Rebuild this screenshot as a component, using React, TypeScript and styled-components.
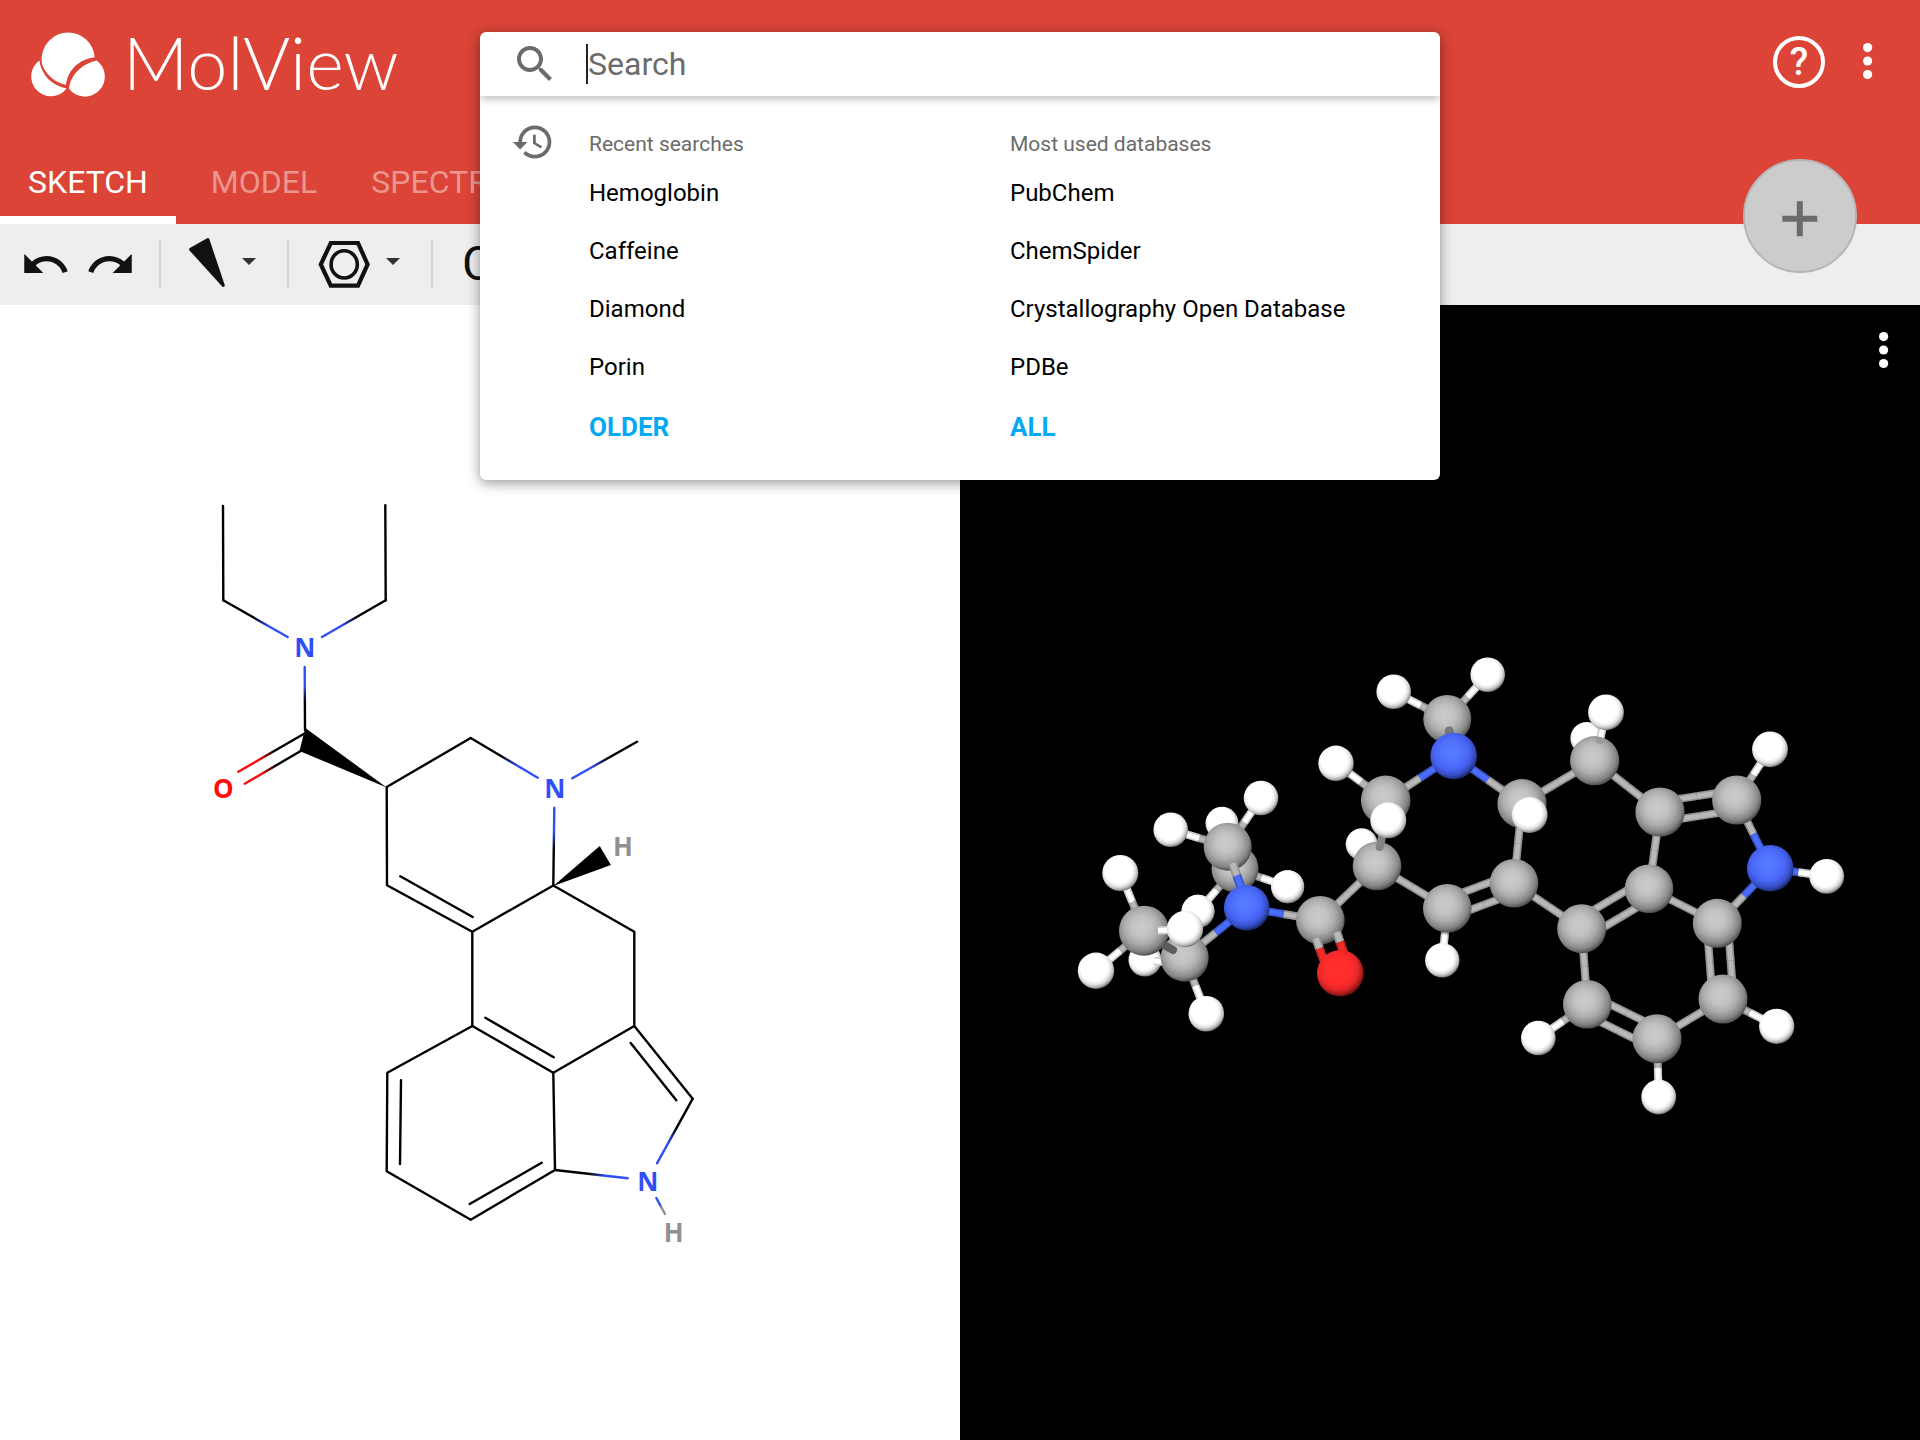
import React from "react";
import styled, { createGlobalStyle } from "styled-components";

const GlobalStyle = createGlobalStyle`
  *, *::before, *::after { box-sizing: border-box; }
  body {
    margin: 0;
    background: #fff;
    font-family: Roboto, "Liberation Sans", sans-serif;
    color: #000;
  }
  button {
    border: 0;
    padding: 0;
    margin: 0;
    background: none;
    font: inherit;
    color: inherit;
    cursor: pointer;
  }
  ul { list-style: none; margin: 0; padding: 0; }
  svg { display: block; }
`;

/* ---------- page frame ---------- */

const Page = styled.div`
  display: flex;
  flex-direction: column;
  min-height: 100vh;
`;

const Header = styled.header`
  position: relative;
  display: flex;
  flex-direction: column;
  background: #db4437;
  color: #fff;
`;

const TopRow = styled.div`
  display: flex;
  justify-content: space-between;
  align-items: flex-start;
  height: 148px;
  padding: 32px 46px 0 31px;
`;

const Brand = styled.a`
  display: flex;
  align-items: flex-start;
  gap: 18px;
  color: inherit;
  text-decoration: none;
`;

const Wordmark = styled.span`
  font-family: Lato, sans-serif;
  font-weight: 300;
  font-size: 72px;
  line-height: 60px;
`;

const Actions = styled.div`
  display: flex;
  align-items: center;
  gap: 37px;
  height: 60px;
`;

const HelpButton = styled.button`
  display: flex;
  align-items: center;
  justify-content: center;
  width: 52px;
  height: 52px;
  border: 4px solid #fff;
  border-radius: 50%;
  font-size: 38px;
  line-height: 44px;
  font-weight: 500;
`;

const Tabs = styled.nav`
  display: flex;
`;

const Tab = styled.button<{ $active?: boolean }>`
  width: 176px;
  height: 76px;
  border-bottom: 8px solid ${(p) => (p.$active ? "#fff" : "transparent")};
  font-size: 32px;
  line-height: 68px;
  text-align: center;
  color: ${(p) => (p.$active ? "#fff" : "rgba(255, 255, 255, 0.45)")};
`;

const AddButton = styled.button`
  position: absolute;
  right: 63px;
  bottom: -49px;
  z-index: 1;
  display: flex;
  align-items: center;
  justify-content: center;
  width: 114px;
  height: 114px;
  border: 2px solid #b5b5b5;
  border-radius: 50%;
  background: #ccc;
`;

/* ---------- search ---------- */

const SearchPanel = styled.section`
  position: absolute;
  top: 32px;
  left: 25%;
  z-index: 2;
  width: 50%;
  border-radius: 6px;
  background: #fff;
  color: #000;
  box-shadow: 0 3px 13px rgba(0, 0, 0, 0.42);
`;

const SearchBar = styled.label`
  display: flex;
  align-items: center;
  height: 64px;
  padding: 0 31px;
  border-radius: 6px 6px 0 0;
  box-shadow: 0 3px 9px rgba(0, 0, 0, 0.26);
  clip-path: inset(0 0 -16px 0);
`;

const TextCursor = styled.span`
  width: 2px;
  height: 40px;
  margin-left: 27px;
  background: #222;
`;

const SearchInput = styled.input`
  flex: 1;
  min-width: 0;
  height: 64px;
  border: 0;
  padding: 0;
  outline: 0;
  background: transparent;
  font-family: inherit;
  font-size: 32px;
  caret-color: transparent;
  &::placeholder {
    color: #6b6b6b;
    opacity: 1;
  }
`;

const Suggestions = styled.div`
  display: grid;
  grid-template-columns: 48px 1fr;
  column-gap: 30px;
  padding: 22px 9px 22px 31px;
`;

const Columns = styled.div`
  display: grid;
  grid-template-columns: 1fr 1fr;
`;

const ColumnTitle = styled.h2`
  margin: 0;
  padding-top: 6px;
  font-size: 21px;
  line-height: 40px;
  font-weight: 400;
  color: #6b6b6b;
`;

const Entry = styled.button`
  display: block;
  width: 100%;
  text-align: left;
  font-size: 24px;
  line-height: 58px;
`;

const MoreButton = styled.button`
  display: block;
  font-size: 26px;
  line-height: 62px;
  font-weight: 700;
  color: #03a9f4;
`;

/* ---------- toolbar ---------- */

const Toolbar = styled.div`
  display: flex;
  align-items: center;
  height: 81px;
  padding-bottom: 1px;
  background: #eee;
  color: #111;
`;

const History = styled.div`
  display: flex;
  gap: 14px;
  padding: 0 23px 0 20px;
`;

const Divider = styled.span`
  width: 2px;
  height: 48px;
  background: #d8d8d8;
`;

const Tool = styled.button`
  display: flex;
  align-items: center;
  gap: 16px;
  height: 80px;
  padding: 0 31px 0 28px;
`;

const ElementTool = styled.button`
  height: 80px;
  padding: 0 28px 0 29px;
  font-size: 48px;
  line-height: 80px;
`;

/* ---------- viewers ---------- */

const Viewers = styled.main`
  flex: 1;
  display: grid;
  grid-template-columns: 1fr 1fr;
`;

const Pane = styled.section<{ $dark?: boolean }>`
  position: relative;
  background: ${(p) => (p.$dark ? "#000" : "#fff")};
  color: ${(p) => (p.$dark ? "#fff" : "#000")};
`;

const Canvas = styled.svg`
  width: 100%;
  height: 100%;
`;

const PaneMenu = styled.button`
  position: absolute;
  top: 27px;
  right: 30px;
`;

/* ---------- icons ---------- */

const Icon = ({ d, size }: { d: string; size: number }) => (
  <svg width={size} height={size} viewBox="0 0 24 24" fill="currentColor" aria-hidden>
    <path d={d} />
  </svg>
);

const UNDO =
  "M12.5 8c-2.65 0-5.05.99-6.9 2.6L2 7v9h9l-3.62-3.62c1.39-1.16 3.16-1.88 5.12-1.88 3.54 0 6.55 2.31 7.6 5.5l2.37-.78C21.08 11.03 17.15 8 12.5 8z";
const REDO =
  "M18.4 10.6C16.55 8.99 14.15 8 11.5 8c-4.65 0-8.58 3.03-9.96 7.22L3.9 16c1.05-3.19 4.05-5.5 7.6-5.5 1.95 0 3.73.72 5.12 1.88L13 16h9V7l-3.6 3.6z";
const SEARCH =
  "M15.5 14h-.79l-.28-.27C15.41 12.59 16 11.11 16 9.5 16 5.91 13.09 3 9.5 3S3 5.91 3 9.5 5.91 16 9.5 16c1.61 0 3.09-.59 4.23-1.57l.27.28v.79l5 4.99L20.49 19l-4.99-5zm-6 0C7.01 14 5 11.99 5 9.5S7.01 5 9.5 5 14 7.01 14 9.5 11.99 14 9.5 14z";
const RECENT =
  "M11.9 3.75c-4.55 0-8.23 3.7-8.23 8.25H.92l3.57 3.57.04.13 3.7-3.7H5.5c0-3.54 2.87-6.42 6.42-6.42 3.54 0 6.4 2.88 6.4 6.42s-2.86 6.42-6.4 6.42c-1.78 0-3.38-.73-4.54-1.9l-1.3 1.3c1.5 1.5 3.55 2.43 5.83 2.43 4.58 0 8.28-3.7 8.28-8.25 0-4.56-3.7-8.25-8.26-8.25zM11 8.33v4.6l3.92 2.3.66-1.1-3.2-1.9v-3.9H11z";

const Muted = styled.span`
  flex: none;
  color: #6b6b6b;
`;

const MarkSvg = styled.svg`
  overflow: visible;
`;

const LogoMark = () => (
  <MarkSvg width="74" height="65" viewBox="94 95 222 194" fill="#fff" aria-hidden>
    <path d="M126 182A80 80 0 0 1 205 96A80 80 0 0 1 285 170C240 176 205 205 199 253C160 245 128 210 126 182Z" />
    <path d="M119 180C125 222 155 255 201 264A59.3 59.3 0 1 1 119 180Z" />
    <path d="M208 265C212 225 245 190 291 180A60 60 0 1 1 208 265Z" />
  </MarkSvg>
);

const Dots = () => (
  <svg width="12" height="39" viewBox="0 0 12 39" fill="#fff" aria-hidden>
    <circle cx="5.6" cy="4.6" r="4.6" />
    <circle cx="5.6" cy="18" r="4.6" />
    <circle cx="5.6" cy="31.5" r="4.6" />
  </svg>
);

const Arrow = () => (
  <svg width="14" height="12" viewBox="0 0 14 12" fill="#333" aria-hidden>
    <path d="M0 0h14L7 7z" />
  </svg>
);

const WedgeIcon = () => (
  <svg width="37" height="52" viewBox="0 0 37 52" aria-hidden>
    <path
      d="M1.6 11.4L18.9 1.6L34.3 47.4Z"
      fill="#111"
      stroke="#111"
      strokeWidth="3"
      strokeLinejoin="round"
    />
  </svg>
);

const RingIcon = () => (
  <svg width="53" height="52" viewBox="0 0 53 52" fill="none" stroke="#111" aria-hidden>
    <path d="M3.8 26.4L13.8 5H41L50.6 26.4L41 47.6H13.8Z" strokeWidth="4.2" />
    <ellipse cx="27.2" cy="26.4" rx="13.1" ry="13.6" strokeWidth="3.6" />
  </svg>
);

const PlusIcon = () => (
  <svg width="36" height="42" viewBox="0 0 36 42" stroke="#6b6b6b" strokeWidth="6" aria-hidden>
    <path d="M.3 23.8H35.3M17.8 6.3V41.3" />
  </svg>
);

/* ---------- structural formula ---------- */

const NITROGEN = "#304ff7";
const OXYGEN = "#ff0d0d";
const HYDROGEN = "#909090";

const AtomLabel = styled.text`
  font-family: "Open Sans", "Noto Sans", sans-serif;
  font-weight: 700;
  font-size: 26px;
  text-anchor: middle;
`;

const plainBonds =
  "M223 506L223.3 600.3M385.3 505.3L385.7 600.3" +
  "M386.7 787L470.7 738M386.7 787L387 885.3L472.3 931.7L553.3 885.5L634.3 931.7V1026L553.3 1072.7L472.3 1026V931.7" +
  "M400.3 876.3L472.7 917M485.3 1017.7L553.7 1057.3" +
  "M472.3 1026L387.3 1072.7L386.7 1171.3L470.7 1219.7L555 1170L553.3 1072.7" +
  "M401 1080.3L400 1164M469.7 1204L541.7 1162.7" +
  "M634.3 1026L692.7 1098.7M630.7 1043L676.3 1100.3";

type Tinted = [number, number, number, number, string];

/* each runs from a carbon to the atom that gives the colour */
const tintedBonds: Tinted[] = [
  [223.3, 600.3, 287.7, 637, NITROGEN],
  [385.7, 600.3, 322, 637, NITROGEN],
  [305, 730, 304.7, 667, NITROGEN],
  [305, 733.3, 238.3, 771.7, OXYGEN],
  [300.7, 751, 244.7, 783.7, OXYGEN],
  [470.7, 738, 537.7, 777.7, NITROGEN],
  [637, 741.7, 572.3, 778.3, NITROGEN],
  [553.3, 885.5, 554.3, 807.7, NITROGEN],
  [692.7, 1098.7, 657, 1163.3, NITROGEN],
  [555, 1170, 627.7, 1178.3, NITROGEN],
];

const labels: [string, number, number, string][] = [
  ["N", 304.7, 656.8, NITROGEN],
  ["O", 223.3, 797.8, OXYGEN],
  ["N", 554.7, 797.8, NITROGEN],
  ["H", 623, 856.4, HYDROGEN],
  ["N", 647.7, 1190.6, NITROGEN],
  ["H", 673.7, 1242.4, HYDROGEN],
];

const Formula = () => (
  <Canvas viewBox="0 305 960 1135" role="img" aria-label="Structural formula">
    <defs>
      {tintedBonds.map(([x1, y1, x2, y2, c], i) => (
        <linearGradient
          key={i}
          id={`tint${i}`}
          gradientUnits="userSpaceOnUse"
          x1={x1}
          y1={y1}
          x2={x2}
          y2={y2}
        >
          <stop offset=".45" stopColor="#000" />
          <stop offset=".7" stopColor={c} />
        </linearGradient>
      ))}
    </defs>
    <g fill="none" strokeWidth="2.4" strokeLinecap="round" strokeLinejoin="round">
      <path d={plainBonds} stroke="#000" />
      {tintedBonds.map(([x1, y1, x2, y2], i) => (
        <path key={i} d={`M${x1} ${y1}L${x2} ${y2}`} stroke={`url(#tint${i})`} />
      ))}
      <path d="M656.3 1198L661 1206.6" stroke={NITROGEN} />
      <path d="M661 1206.6L665 1214" stroke={HYDROGEN} />
    </g>
    <path d="M305.3 728L299.5 751L386.7 787.5Z" />
    <path d="M599.7 846L610.9 865L553.3 886Z" />
    {labels.map(([t, x, y, c], i) => (
      <AtomLabel key={i} x={x} y={y} fill={c}>
        {t}
      </AtomLabel>
    ))}
  </Canvas>
);

/* ---------- ball and stick model ---------- */

type Kind = "C" | "H" | "N" | "O";
type Atom = [Kind, number, number, number];

const stick: Record<Kind, string> = { C: "#b8b8b8", H: "#ffffff", N: "#4a6cff", O: "#f52a2a" };

const atoms: Record<string, Atom> = {
  hBackX: ["H", 1361.7, 844.3, 16],
  hBackA: ["H", 1222, 823.3, 16.5],
  hBackB: ["H", 1145, 960, 16.5],
  hBackS: ["H", 1586.7, 738.3, 16.3],
  h1: ["H", 1287.7, 886.7, 16.5],
  h2: ["H", 1198, 911.3, 16.5],
  cA2: ["C", 1235, 868.7, 23.5],
  h3: ["H", 1393.7, 691.7, 17.3],
  h4: ["H", 1487.7, 674.7, 17.3],
  cMe: ["C", 1447.3, 719, 24],
  h5: ["H", 1336, 763.3, 17.7],
  cH2: ["C", 1385.7, 800.3, 24.8],
  cX: ["C", 1377, 866, 24.3],
  cCO: ["C", 1320.3, 920.3, 24.3],
  cA: ["C", 1227.7, 846.7, 24],
  h6: ["H", 1261, 798, 17.3],
  h7: ["H", 1170.7, 829.7, 17.3],
  cB2: ["C", 1184.7, 957.7, 24],
  cB: ["C", 1144, 930.7, 25],
  h8: ["H", 1120.3, 873, 18],
  h9: ["H", 1096, 970.7, 18.2],
  h10: ["H", 1206.3, 1013.7, 17.8],
  cP: ["C", 1447.3, 908.3, 24.3],
  h11: ["H", 1442.3, 960.3, 17.2],
  cQ: ["C", 1522, 803.7, 24.6],
  cR: ["C", 1514, 883.3, 24.3],
  cS: ["C", 1594.7, 760.7, 24.6],
  cT: ["C", 1660, 812, 24.6],
  cU: ["C", 1736.7, 800, 24.6],
  h12: ["H", 1770, 749.3, 17.9],
  nC: ["N", 1770.3, 868.3, 23.3],
  h13: ["H", 1826.7, 876.3, 17.4],
  cV: ["C", 1649, 888.7, 24.3],
  cW: ["C", 1581.7, 928.7, 24.5],
  cX2: ["C", 1717.3, 923.3, 24.5],
  cY: ["C", 1723, 999, 24.5],
  h14: ["H", 1776.7, 1026.3, 17.6],
  cZ: ["C", 1657, 1038.7, 24.5],
  h15: ["H", 1658.7, 1097, 17.4],
  cAA: ["C", 1587.3, 1004.3, 24.3],
  h16: ["H", 1538.3, 1038, 17.3],
  nA: ["N", 1453.7, 756, 23.3],
  nB: ["N", 1246.7, 907.7, 22.8],
  oA: ["O", 1340.3, 973.3, 23.3],
  hFrontX: ["H", 1388.3, 820.3, 18],
  hFrontB: ["H", 1185, 929, 18.2],
  hFrontQ: ["H", 1529.7, 815, 17.9],
  hFrontS: ["H", 1606, 712.3, 17.9],
};

const bonds: [string, string, number?][] = [
  ["cMe", "h3"], ["cMe", "h4"], ["nA", "cH2"], ["nA", "cQ"], ["cH2", "h5"],
  ["cX", "cCO"], ["cX", "cP"], ["cCO", "nB"], ["cB2", "nB"], ["cA", "h6"], ["cA", "h7"],
  ["cB", "h8"], ["cB", "h9"], ["cB2", "h10"], ["cP", "cR", 9.5], ["cP", "h11"],
  ["cQ", "cR"], ["cQ", "cS"], ["cS", "cT"], ["cT", "cU", 10], ["cU", "h12"], ["cU", "nC"],
  ["nC", "h13"], ["nC", "cX2"], ["cT", "cV"], ["cV", "cX2"], ["cV", "cW", 10], ["cR", "cW"],
  ["cW", "cAA"], ["cAA", "h16"], ["cAA", "cZ", 10], ["cZ", "h15"], ["cZ", "cY"],
  ["cY", "h14"], ["cX2", "cY", 10.5],
];

const backAtoms = ["hBackX", "hBackA", "hBackB", "hBackS", "h1", "h2"];
const frontAtoms = ["nA", "nB", "oA", "hFrontX", "hFrontB", "hFrontQ", "hFrontS"];
const middleAtoms = Object.keys(atoms).filter(
  (k) => !backAtoms.includes(k) && !frontAtoms.includes(k) && k !== "cA2"
);

const Rod = ({ x1, y1, x2, y2, c, w = 8 }: {
  x1: number; y1: number; x2: number; y2: number; c: string; w?: number;
}) => {
  const d = `M${x1} ${y1}L${x2} ${y2}`;
  return (
    <g fill="none" stroke={c}>
      <path d={d} strokeWidth={w} />
      <path d={d} strokeWidth={w} stroke="#000" strokeOpacity=".2" />
      <path d={d} strokeWidth={w * 0.6} />
    </g>
  );
};

const Bond = ({ from, to, split = 0 }: { from: string; to: string; split?: number }) => {
  const [k1, x1, y1] = atoms[from];
  const [k2, x2, y2] = atoms[to];
  const len = Math.hypot(x2 - x1, y2 - y1);
  const nx = -(y2 - y1) / len;
  const ny = (x2 - x1) / len;
  const mx = (x1 + x2) / 2;
  const my = (y1 + y2) / 2;
  const offsets = split ? [-split, split] : [0];
  return (
    <>
      {offsets.map((o) => {
        const dx = nx * o;
        const dy = ny * o;
        return (
          <g key={o}>
            <Rod x1={x1 + dx} y1={y1 + dy} x2={mx + dx} y2={my + dy} c={stick[k1]} />
            <Rod x1={mx + dx} y1={my + dy} x2={x2 + dx} y2={y2 + dy} c={stick[k2]} />
          </g>
        );
      })}
    </>
  );
};

const Ball = ({ id }: { id: string }) => {
  const [kind, x, y, r] = atoms[id];
  return <circle cx={x} cy={y} r={r} fill={`url(#ball${kind})`} />;
};

const shades: Record<Kind, [number, string][]> = {
  C: [[0, "#cbcbcb"], [0.35, "#c2c2c2"], [0.6, "#acacac"], [0.85, "#848484"], [1, "#505050"]],
  H: [[0, "#ffffff"], [0.64, "#ffffff"], [0.8, "#e2e2e2"], [0.92, "#b0b0b0"], [1, "#747474"]],
  N: [[0, "#587cff"], [0.35, "#5274ff"], [0.65, "#4764f4"], [0.85, "#364ec4"], [1, "#1c2a70"]],
  O: [[0, "#ff3030"], [0.5, "#ff2c2c"], [0.74, "#e82727"], [0.88, "#b01d1d"], [1, "#641010"]],
};

const Model = () => (
  <Canvas viewBox="960 305 960 1135" role="img" aria-label="Ball and stick model">
    <defs>
      {(Object.keys(shades) as Kind[]).map((k) => (
        <radialGradient key={k} id={`ball${k}`} cx=".45" cy=".42" r=".58">
          {shades[k].map(([o, c]) => (
            <stop key={o} offset={o} stopColor={c} />
          ))}
        </radialGradient>
      ))}
    </defs>
    {backAtoms.map((k) => <Ball key={k} id={k} />)}
    <Bond from="cA2" to="h1" />
    <Bond from="cA2" to="h2" />
    <Ball id="h1" />
    <Ball id="h2" />
    <Rod x1={1154} y1={961} x2={1164} y2={962} c="#fff" />
    <Ball id="cA2" />
    {bonds.map(([a, b, s]) => <Bond key={a + b} from={a} to={b} split={s} />)}
    {middleAtoms.map((k) => <Ball key={k} id={k} />)}
    <path d="M1449.3 731V745" stroke="#787878" strokeWidth="9" strokeLinecap="round" />
    <path d="M1379.8 847L1384 828" stroke="#848484" strokeWidth="8" strokeLinecap="round" />
    <path d="M1166 946L1173 950" stroke="#5c5c5c" strokeWidth="8" strokeLinecap="round" />
    <Rod x1={1232.5} y1={863} x2={1236.8} y2={875.5} c={stick.C} w={9} />
    <Rod x1={1236.8} y1={875.5} x2={1243} y2={893} c={stick.N} w={9} />
    <Rod x1={1316} y1={938} x2={1319.5} y2={948.5} c={stick.C} w={9} />
    <Rod x1={1319.5} y1={948.5} x2={1326} y2={966} c={stick.O} w={9} />
    <Rod x1={1336.5} y1={932} x2={1340} y2={942} c={stick.C} w={9} />
    <Rod x1={1340} y1={942} x2={1346} y2={960} c={stick.O} w={9} />
    <Rod x1={1158} y1={930.5} x2={1170} y2={930} c="#fff" />
    <path d="M1599.8 740L1601 735" stroke="#9a9a9a" strokeWidth="8" strokeLinecap="round" />
    <Rod x1={1600.6} y1={737} x2={1604} y2={722} c="#fff" />
    {frontAtoms.map((k) => <Ball key={k} id={k} />)}
  </Canvas>
);

/* ---------- page ---------- */

const recent = ["Hemoglobin", "Caffeine", "Diamond", "Porin"];
const databases = ["PubChem", "ChemSpider", "Crystallography Open Database", "PDBe"];

const SuggestionColumn = ({ title, items, more }: { title: string; items: string[]; more: string }) => (
  <div>
    <ColumnTitle>{title}</ColumnTitle>
    <ul>
      {items.map((item) => (
        <li key={item}>
          <Entry type="button">{item}</Entry>
        </li>
      ))}
    </ul>
    <MoreButton type="button">{more}</MoreButton>
  </div>
);

export default function App() {
  return (
    <Page>
      <GlobalStyle />
      <Header>
        <TopRow>
          <Brand href="#">
            <LogoMark />
            <Wordmark>MolView</Wordmark>
          </Brand>
          <Actions>
            <HelpButton type="button">?</HelpButton>
            <button type="button" aria-label="Menu">
              <Dots />
            </button>
          </Actions>
        </TopRow>
        <Tabs>
          <Tab type="button" $active>SKETCH</Tab>
          <Tab type="button">MODEL</Tab>
          <Tab type="button">SPECTRA</Tab>
        </Tabs>
        <SearchPanel>
          <SearchBar htmlFor="search">
            <Muted><Icon d={SEARCH} size={48} /></Muted>
            <TextCursor />
            <SearchInput id="search" type="text" placeholder="Search" aria-label="Search" />
          </SearchBar>
          <Suggestions>
            <Muted><Icon d={RECENT} size={48} /></Muted>
            <Columns>
              <SuggestionColumn title="Recent searches" items={recent} more="OLDER" />
              <SuggestionColumn title="Most used databases" items={databases} more="ALL" />
            </Columns>
          </Suggestions>
        </SearchPanel>
        <AddButton type="button" aria-label="Add">
          <PlusIcon />
        </AddButton>
      </Header>
      <Toolbar>
        <History>
          <button type="button" aria-label="Undo"><Icon d={UNDO} size={51} /></button>
          <button type="button" aria-label="Redo"><Icon d={REDO} size={51} /></button>
        </History>
        <Divider />
        <Tool type="button" aria-label="Bond"><WedgeIcon /><Arrow /></Tool>
        <Divider />
        <Tool type="button" aria-label="Ring"><RingIcon /><Arrow /></Tool>
        <Divider />
        <ElementTool type="button">C</ElementTool>
      </Toolbar>
      <Viewers>
        <Pane>
          <Formula />
        </Pane>
        <Pane $dark>
          <Model />
          <PaneMenu type="button" aria-label="Model menu">
            <Dots />
          </PaneMenu>
        </Pane>
      </Viewers>
    </Page>
  );
}
